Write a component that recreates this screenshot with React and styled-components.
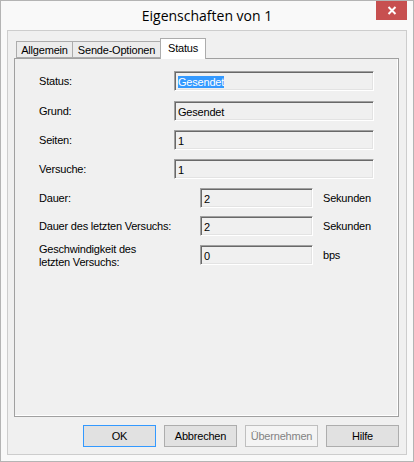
import styled, { createGlobalStyle } from "styled-components";

const GlobalStyle = createGlobalStyle`
  html, body {
    margin: 0;
    padding: 0;
    background: #ffffff;
  }
`;

const rows = [
  { label: "Status:", value: "Gesendet", selected: true, top: 12 },
  { label: "Grund:", value: "Gesendet", top: 10 },
  { label: "Seiten:", value: "1", top: 9 },
  { label: "Versuche:", value: "1", top: 9 },
  { label: "Dauer:", value: "2", unit: "Sekunden", short: true, top: 9 },
  { label: "Dauer des letzten Versuchs:", value: "2", unit: "Sekunden", short: true, top: 8 },
  {
    label: ["Geschwindigkeit des", "letzten Versuchs:"],
    value: "0",
    unit: "bps",
    short: true,
    top: 9,
  },
];

const tabs = [
  { title: "Allgemein", width: 57 },
  { title: "Sende-Optionen", width: 89 },
  { title: "Status", width: 46, active: true },
];

const App = () => {
  return (
    <>
      <GlobalStyle />
      <Window>
        <TitleBar>
          <Title>Eigenschaften von 1</Title>
          <CloseButton aria-label="Schließen">
            <svg width="10" height="9" viewBox="0 0 10 9">
              <path
                d="M1.5 1 L8.5 8 M8.5 1 L1.5 8"
                stroke="#ffffff"
                strokeWidth="2"
                fill="none"
              />
            </svg>
          </CloseButton>
        </TitleBar>

        <Client>
          <TabStrip>
            {tabs.map((t) => (
              <Tab key={t.title} $active={t.active} $width={t.width}>
                {t.title}
              </Tab>
            ))}
          </TabStrip>

          <Panel>
            {rows.map((r, i) => (
              <Row key={i} $top={r.top}>
                <Label $short={r.short}>
                  {Array.isArray(r.label)
                    ? r.label.map((l) => <span key={l}>{l}</span>)
                    : r.label}
                </Label>
                <Field $short={r.short}>
                  {r.selected ? <Selection>{r.value}</Selection> : r.value}
                </Field>
                {r.unit && <Unit>{r.unit}</Unit>}
              </Row>
            ))}
          </Panel>

          <ButtonBar>
            <Button $default>OK</Button>
            <Button>Abbrechen</Button>
            <Button disabled>Übernehmen</Button>
            <Button>Hilfe</Button>
          </ButtonBar>
        </Client>
      </Window>
    </>
  );
};

const Window = styled.div`
  width: 414px;
  height: 462px;
  box-sizing: border-box;
  border: 1px solid #b4b4b4;
  background: #f9f9f9;
  display: flex;
  flex-direction: column;
  padding: 0 6px 6px 6px;
  font-family: "Liberation Sans", Arial, sans-serif;
  font-size: 11px;
  letter-spacing: -0.2px;
  color: #000;
`;

const TitleBar = styled.div`
  height: 29px;
  position: relative;
  display: flex;
  align-items: center;
  justify-content: center;
`;

const Title = styled.div`
  font-family: "Open Sans", "Noto Sans", sans-serif;
  font-size: 14px;
  letter-spacing: 0;
  color: #000;
  margin-top: -1px;
`;

const CloseButton = styled.div`
  position: absolute;
  top: 0;
  right: 0;
  width: 31px;
  height: 19px;
  background: #c75050;
  display: flex;
  align-items: center;
  justify-content: center;
`;

const Client = styled.div`
  flex: 1;
  border: 1px solid #cdcdcd;
  background: #f0f0f0;
  display: flex;
  flex-direction: column;
  padding: 7px 7px 0 6px;
`;

const TabStrip = styled.div`
  display: flex;
  align-items: flex-end;
  height: 20px;
  padding-left: 2px;
  position: relative;
  z-index: 1;
`;

const Tab = styled.div`
  box-sizing: border-box;
  width: ${(p) => p.$width}px;
  height: ${(p) => (p.$active ? "21px" : "17px")};
  padding-top: ${(p) => (p.$active ? "2px" : "1px")};
  margin-bottom: ${(p) => (p.$active ? "-1px" : "0")};
  border: 1px solid #acacac;
  border-bottom: ${(p) => (p.$active ? "none" : "1px solid #acacac")};
  background: ${(p) => (p.$active ? "#ffffff" : "#ececec")};
  text-align: center;
  & + & {
    margin-left: -1px;
  }
  line-height: 14px;
  white-space: nowrap;
`;

const Panel = styled.div`
  height: 359px;
  box-sizing: border-box;
  border: 1px solid #a0a0a0;
  box-shadow: inset -1px -1px 0 #ffffff;
  background: #f0f0f0;
  padding-left: 24px;
  display: flex;
  flex-direction: column;
`;

const Row = styled.div`
  display: flex;
  align-items: center;
  height: 20px;
  margin-top: ${(p) => p.$top}px;
`;

const Label = styled.div`
  width: ${(p) => (p.$short ? "161px" : "135px")};
  display: flex;
  flex-direction: column;
  line-height: 13px;
  padding-top: 1px;
`;

const Field = styled.div`
  box-sizing: border-box;
  width: ${(p) => (p.$short ? "113px" : "200px")};
  height: 20px;
  border-top: 1px solid #a0a0a0;
  border-left: 1px solid #a0a0a0;
  border-right: 1px solid #ffffff;
  border-bottom: 1px solid #ffffff;
  box-shadow: inset 1px 1px 0 #696969, inset -1px -1px 0 #e3e3e3;
  background: #f0f0f0;
  padding: 3px 0 0 3px;
  line-height: 14px;
  white-space: nowrap;
  overflow: hidden;
`;

const Selection = styled.span`
  background: #3399ff;
  color: #ffffff;
`;

const Unit = styled.div`
  margin-left: 10px;
`;

const ButtonBar = styled.div`
  display: flex;
  justify-content: flex-end;
  gap: 8px;
  margin-top: 8px;
`;

const Button = styled.button`
  width: 73px;
  height: 22px;
  box-sizing: border-box;
  font-family: "Liberation Sans", Arial, sans-serif;
  font-size: 11px;
  letter-spacing: -0.2px;
  padding: 0;
  background: ${(p) => (p.disabled ? "#f4f4f4" : "#e1e1e1")};
  color: ${(p) => (p.disabled ? "#838383" : "#000")};
  border: 1px solid
    ${(p) => (p.$default ? "#3399ff" : p.disabled ? "#bfbfbf" : "#adadad")};
  border-radius: 0;
`;

export default App;
